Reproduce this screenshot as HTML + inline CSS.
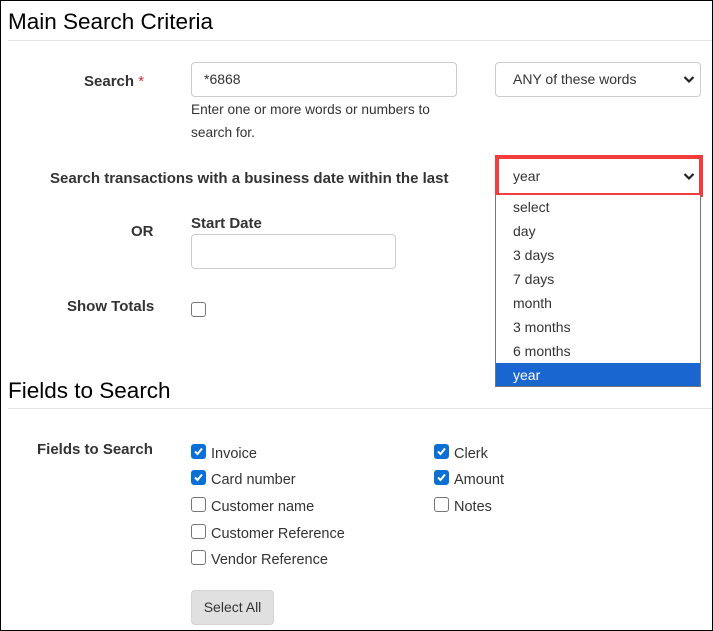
<!DOCTYPE html><html><head><style>
*{box-sizing:border-box;margin:0;padding:0}
body{width:713px;height:631px;overflow:hidden;background:#fff;font-family:"Liberation Sans",sans-serif;font-size:14px;color:#333;position:relative}
.frame{position:absolute;left:0;top:0;width:713px;height:631px;border:1px solid #000;pointer-events:none}
.a{position:absolute;white-space:nowrap}
h1{position:absolute;left:8px;font-weight:normal;font-size:22.5px;color:#000;line-height:26px}
.hr{position:absolute;left:8px;right:0;height:1px;background:#e5e5e5}
.b{font-weight:bold;font-size:15px}
.l{font-size:14.5px}
.in{position:absolute;border:1px solid #ccc;border-radius:4px;background:#fff}
.cb{position:absolute;width:13px;height:13px;border:1px solid #767676;border-radius:3px;background:#fff}
.cb.on{background:#0b6fd6;border-color:#0b6fd6}
.cb.on svg{position:absolute;left:1px;top:1px}
.chev{position:absolute}
</style></head><body>
<h1 style="top:9px">Main Search Criteria</h1>
<div class="hr" style="top:40px"></div>
<div class="a b" style="left:84px;top:73px">Search <span style="color:#c33;font-weight:normal">*</span></div>
<div class="in" style="left:191px;top:62px;width:266px;height:35px"></div>
<div class="a" style="left:204px;top:71px">*6868</div>
<div class="in" style="left:495px;top:62px;width:206px;height:35px"></div>
<div class="a" style="left:513px;top:71px">ANY of these words</div>
<svg class="chev" style="left:683px;top:75px" width="12" height="9" viewBox="0 0 12 9"><path d="M1.5 2l4.5 4.5L10.5 2" stroke="#222" stroke-width="2.2" fill="none"/></svg>
<div class="a" style="left:191px;top:98px;line-height:23px;white-space:normal;width:260px;font-size:13.7px">Enter one or more words or numbers to search for.</div>
<div class="a b" style="left:50px;top:170px">Search transactions with a business date within the last</div>
<div style="position:absolute;left:495px;top:155px;width:208px;height:42px;border:4px solid #f33d3d"></div>
<div style="position:absolute;left:499px;top:159px;width:200px;height:34px;background:#fff"></div>
<div class="a" style="left:513px;top:168px">year</div>
<svg class="chev" style="left:683px;top:172px" width="12" height="9" viewBox="0 0 12 9"><path d="M1.5 2l4.5 4.5L10.5 2" stroke="#222" stroke-width="2.2" fill="none"/></svg>
<div style="position:absolute;left:495px;top:195px;width:206px;height:192px;border:1px solid #767676;border-top:none;background:#fff"></div>
<div class="a" style="left:513px;top:199px">select</div>
<div class="a" style="left:513px;top:223px">day</div>
<div class="a" style="left:513px;top:247px">3 days</div>
<div class="a" style="left:513px;top:271px">7 days</div>
<div class="a" style="left:513px;top:295px">month</div>
<div class="a" style="left:513px;top:319px">3 months</div>
<div class="a" style="left:513px;top:343px">6 months</div>
<div style="position:absolute;left:496px;top:363px;width:204px;height:23px;background:#1a66d1"></div>
<div class="a" style="left:513px;top:367px;color:#fff">year</div>
<div class="a b" style="left:131px;top:223px">OR</div>
<div class="a b" style="left:191px;top:215px">Start Date</div>
<div class="in" style="left:191px;top:234px;width:205px;height:35px"></div>
<div class="a b" style="left:67px;top:298px">Show Totals</div>
<div class="cb" style="left:191px;top:302px;width:15px;height:15px"></div>
<h1 style="top:378px">Fields to Search</h1>
<div class="hr" style="top:408px"></div>
<div class="a b" style="left:37px;top:441px">Fields to Search</div>
<div class="cb on" style="left:191px;top:444px;width:15px;height:15px"><svg width="11" height="11" viewBox="0 0 11 11"><path d="M2 5.5l2.5 2.5L9 2.5" stroke="#fff" stroke-width="2" fill="none"/></svg></div>
<div class="a l" style="left:211px;top:446px">Invoice</div>
<div class="cb on" style="left:191px;top:470px;width:15px;height:15px"><svg width="11" height="11" viewBox="0 0 11 11"><path d="M2 5.5l2.5 2.5L9 2.5" stroke="#fff" stroke-width="2" fill="none"/></svg></div>
<div class="a l" style="left:211px;top:472px">Card number</div>
<div class="cb" style="left:191px;top:497px;width:15px;height:15px"></div>
<div class="a l" style="left:211px;top:499px">Customer name</div>
<div class="cb" style="left:191px;top:524px;width:15px;height:15px"></div>
<div class="a l" style="left:211px;top:526px">Customer Reference</div>
<div class="cb" style="left:191px;top:550px;width:15px;height:15px"></div>
<div class="a l" style="left:211px;top:552px">Vendor Reference</div>
<div class="cb on" style="left:434px;top:444px;width:15px;height:15px"><svg width="11" height="11" viewBox="0 0 11 11"><path d="M2 5.5l2.5 2.5L9 2.5" stroke="#fff" stroke-width="2" fill="none"/></svg></div>
<div class="a l" style="left:454px;top:446px">Clerk</div>
<div class="cb on" style="left:434px;top:470px;width:15px;height:15px"><svg width="11" height="11" viewBox="0 0 11 11"><path d="M2 5.5l2.5 2.5L9 2.5" stroke="#fff" stroke-width="2" fill="none"/></svg></div>
<div class="a l" style="left:454px;top:472px">Amount</div>
<div class="cb" style="left:434px;top:497px;width:15px;height:15px"></div>
<div class="a l" style="left:454px;top:499px">Notes</div>
<div style="position:absolute;left:191px;top:590px;width:83px;height:35px;background:#e0e0e0;border:1px solid #d4d4d4;border-radius:4px;text-align:center;line-height:32px;color:#333">Select All</div>
<div class="frame"></div>
</body></html>
